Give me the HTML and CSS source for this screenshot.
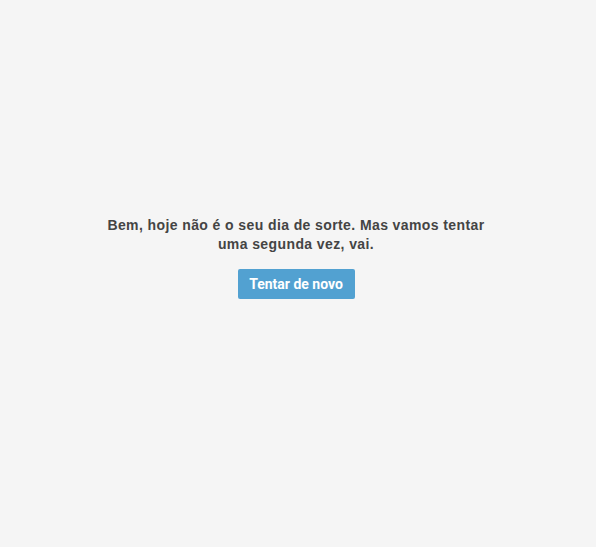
FILE: index.html
```html
<!DOCTYPE html>
<html lang="pt">
<head>
<meta charset="utf-8">
<link rel="stylesheet" href="styles.css">
</head>
<body>
<main class="error">
  <p class="message">Bem, hoje não é o seu dia de sorte. Mas vamos tentar uma segunda vez, vai.</p>
  <button class="retry" type="button">Tentar de novo</button>
</main>
</body>
</html>
```
FILE: styles.css
```css
html, body {
  margin: 0;
  padding: 0;
  height: 100%;
  background: #f5f5f5;
}
.error {
  display: flex;
  flex-direction: column;
  align-items: center;
  padding-top: 216px;
  padding-right: 4px;
  font-family: "Liberation Sans", Arial, sans-serif;
}
.message {
  margin: 0;
  width: 392px;
  text-align: center;
  font-size: 14px;
  font-weight: bold;
  line-height: 19px;
  letter-spacing: 0.4px;
  color: #444;
}
.retry {
  margin-top: 15px;
  width: 117px;
  height: 30px;
  border: none;
  border-radius: 2px;
  background: #52a1d1;
  color: #fff;
  font-family: Roboto, "Liberation Sans", sans-serif;
  font-weight: bold;
  font-size: 14px;
  padding: 0;
}
```
